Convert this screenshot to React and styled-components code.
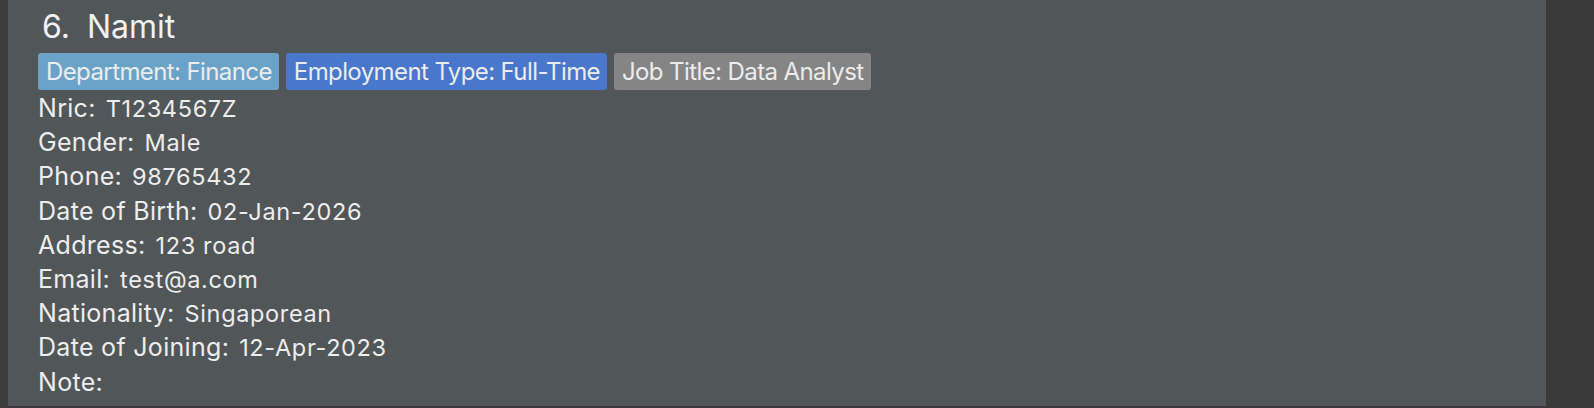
import React from 'react'
import styled, { createGlobalStyle } from 'styled-components';

const GlobalStyle = createGlobalStyle`
  html, body {
    margin: 0;
    padding: 0;
    background: #3a3a3a;
  }
`;

const Page = styled.div`
  display: flex;
  height: 408px;
  background: #3a3a3a;
  font-family: Inter, "Noto Sans", sans-serif;
  overflow: hidden;
`;

const LeftEdge = styled.div`
  width: 8px;
  flex-shrink: 0;
  background: #3c3c3c;
`;

const Gutter = styled.div`
  width: 48px;
  flex-shrink: 0;
  background: #3a3a3a;
`;

const Card = styled.div`
  flex: 1;
  margin-bottom: 2px;
  padding: 8px 30px 0 30px;
  background: #515659;
  display: flex;
  flex-direction: column;
  overflow: hidden;
`;

const NameRow = styled.div`
  display: flex;
  align-items: baseline;
  gap: 17px;
  font-size: 32px;
  line-height: 38px;
  color: #f0f0f0;
  padding-left: 4px;
`;

const Tags = styled.div`
  display: flex;
  gap: 7px;
  margin-top: 7px;
`;

const Tag = styled.span`
  display: inline-block;
  height: 37px;
  line-height: 37px;
  padding: 0 7px 0 8px;
  border-radius: 3px;
  font-size: 24px;
  letter-spacing: -0.6px;
  color: #ececec;
  background: ${(p) => p.color};
`;

const Fields = styled.div`
  display: flex;
  flex-direction: column;
  margin-top: 1px;
`;

const Row = styled.div`
  display: flex;
  align-items: baseline;
  height: 34.2px;
  gap: 10px;
  color: #ededed;
`;

const Label = styled.span`
  font-size: 25px;
  line-height: 34.2px;
  letter-spacing: 0.3px;
`;

const Value = styled.span`
  font-size: 23.5px;
  line-height: 34.2px;
  letter-spacing: 0.65px;
`;

const tags = [
  { text: 'Department: Finance', color: '#6ba3c8' },
  { text: 'Employment Type: Full-Time', color: '#4877cc' },
  { text: 'Job Title: Data Analyst', color: '#858585' },
];

const fields = [
  ['Nric:', 'T1234567Z'],
  ['Gender:', 'Male'],
  ['Phone:', '98765432'],
  ['Date of Birth:', '02-Jan-2026'],
  ['Address:', '123 road'],
  ['Email:', 'test@a.com'],
  ['Nationality:', 'Singaporean'],
  ['Date of Joining:', '12-Apr-2023'],
  ['Note:', ''],
];

function App() {
  return (
    <>
      <GlobalStyle />
      <Page>
        <LeftEdge />
        <Card>
          <NameRow>
            <span>6.</span>
            <span>Namit</span>
          </NameRow>
          <Tags>
            {tags.map((t) => (
              <Tag key={t.text} color={t.color}>{t.text}</Tag>
            ))}
          </Tags>
          <Fields>
            {fields.map(([label, value]) => (
              <Row key={label}>
                <Label>{label}</Label>
                <Value>{value}</Value>
              </Row>
            ))}
          </Fields>
        </Card>
        <Gutter />
      </Page>
    </>
  )
}

export default App
